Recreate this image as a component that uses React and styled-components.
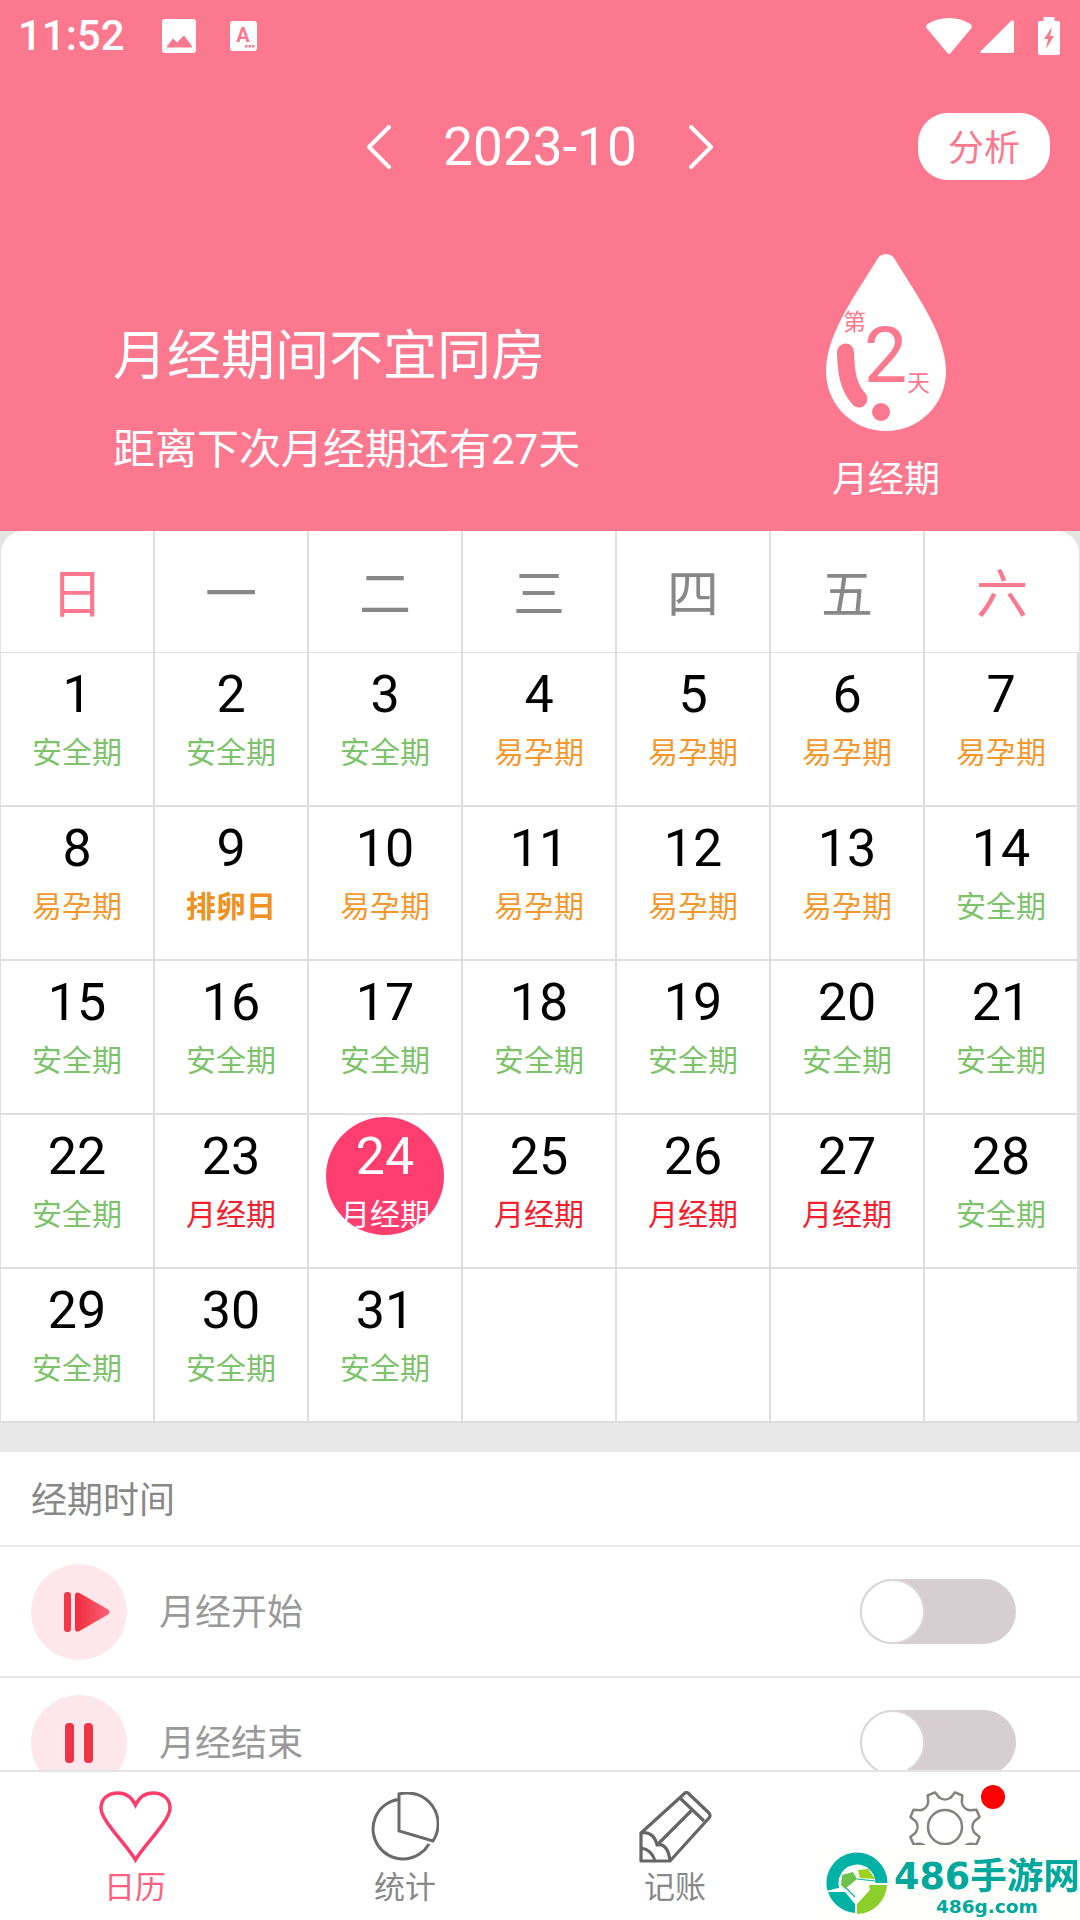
import styled, { createGlobalStyle } from "styled-components";

const PINK = "#fc788e";
const CJK = `"Noto Sans CJK SC", "Noto Sans", sans-serif`;

const GlobalStyle = createGlobalStyle`
  html, body {
    margin: 0;
    padding: 0;
    background: #fff;
    font-family: Roboto, ${CJK};
  }
  * { box-sizing: border-box; }
`;

const Page = styled.div`
  position: relative;
  width: 1080px;
  height: 1920px;
  display: flex;
  flex-direction: column;
  overflow: hidden;
  background: #fff;
`;

const Scroll = styled.div`
  flex: 1;
  min-height: 0;
  overflow: hidden;
`;

/* header */
const Header = styled.header`
  height: 531px;
  background: ${PINK};
  color: #fff;
  display: flex;
  flex-direction: column;
`;

const StatusBar = styled.div`
  height: 72px;
  padding: 0 20px 0 18px;
  display: flex;
  align-items: center;
  justify-content: space-between;
`;

const StatusGroup = styled.div`
  display: flex;
  align-items: center;
  gap: ${(p) => p.$gap}px;
`;

const Clock = styled.span`
  font-size: 42px;
  font-weight: 500;
  line-height: 48px;
  width: 110px;
`;

const BatterySlot = styled.div`
  margin-left: 16px;
  display: flex;
`;

const NavRow = styled.div`
  height: 150px;
  padding: 0 30px;
  display: grid;
  grid-template-columns: 1fr auto 1fr;
  align-items: center;
`;

const MonthPicker = styled.div`
  grid-column: 2;
  display: flex;
  align-items: center;
  gap: 52px;
  font-size: 53px;
`;

const AnalyseButton = styled.button`
  grid-column: 3;
  justify-self: end;
  width: 132px;
  height: 67px;
  border: 0;
  padding: 0 0 3px;
  margin-bottom: 2px;
  border-radius: 30px;
  background: #fff;
  color: ${PINK};
  font-family: ${CJK};
  font-size: 36px;
`;

const Banner = styled.div`
  flex: 1;
  display: flex;
  justify-content: space-between;
  padding-right: 74px;
`;

const Advice = styled.div`
  padding: 105px 0 0 113px;
  font-family: Roboto, ${CJK};
`;

const AdviceTitle = styled.div`
  font-size: 54px;
  line-height: 60px;
`;

const AdviceSub = styled.div`
  margin-top: 38px;
  font-size: 42px;
  line-height: 50px;
`;

const Phase = styled.div`
  width: 240px;
  padding-top: 30px;
  display: flex;
  flex-direction: column;
  align-items: center;
`;

const Drop = styled.div`
  position: relative;
  width: 120px;
  height: 179px;
  color: ${PINK};
`;

const DropText = styled.span`
  position: absolute;
  left: ${(p) => p.$x}px;
  top: ${(p) => p.$y}px;
  font-size: ${(p) => p.$size}px;
  line-height: 1;
`;

const PhaseName = styled.div`
  margin-top: 22px;
  font-family: ${CJK};
  font-size: 36px;
  line-height: 46px;
`;

/* calendar */
const Calendar = styled.div`
  background: #e4e4e4;
`;

const Weekdays = styled.div`
  display: grid;
  grid-template-columns: repeat(7, 154px);
  padding-left: 1px;
  width: 1080px;
`;

const Weekday = styled.div`
  height: 122px;
  padding-bottom: 3px;
  background: #fff;
  border-right: 2px solid #dedede;
  border-bottom: 1px solid #dedede;
  display: flex;
  align-items: center;
  justify-content: center;
  font-family: ${CJK};
  font-size: 52px;
  color: ${(p) => (p.$weekend ? PINK : "#888")};
  &:first-child { border-top-left-radius: 22px; }
  &:last-child { border-top-right-radius: 22px; border-right: 0; }
`;

const Days = styled.div`
  display: grid;
  grid-template-columns: repeat(7, 154px);
  padding-left: 1px;
  background: #dedede;
`;

const Day = styled.div`
  position: relative;
  height: 154px;
  background: #fff;
  border-right: 2px solid #dedede;
  border-bottom: 2px solid #dedede;
  display: flex;
  flex-direction: column;
  align-items: center;
  padding-top: 12px;
  overflow: hidden;
`;

const TodayCircle = styled.div`
  position: absolute;
  left: 17px;
  top: 2px;
  width: 118px;
  height: 118px;
  border-radius: 50%;
  background: #ff3e70;
`;

const DayNumber = styled.div`
  position: relative;
  font-family: Roboto, sans-serif;
  font-size: 52px;
  line-height: 60px;
  color: ${(p) => (p.$today ? "#fff" : "#000")};
`;

const labelColors = {
  safe: "#7dc36b",
  fertile: "#f4972d",
  ovulation: "#ee9223",
  period: "#f5202e",
  today: "#fff",
};

const DayLabel = styled.div`
  position: relative;
  margin-top: 3px;
  font-family: ${CJK};
  font-size: 30px;
  line-height: 44px;
  font-weight: ${(p) => (p.$kind === "ovulation" ? 700 : 400)};
  color: ${(p) => labelColors[p.$kind]};
`;

const Gap = styled.div`
  height: 29px;
  background: #e8e8e8;
`;

/* period settings */
const SectionTitle = styled.div`
  height: 95px;
  padding: 0 0 4px 31px;
  display: flex;
  align-items: center;
  font-family: ${CJK};
  font-size: 36px;
  color: #888;
  border-bottom: 2px solid #e8e8e8;
`;

const Row = styled.div`
  height: 131px;
  padding: 0 64px 0 31px;
  display: flex;
  align-items: center;
  border-bottom: 2px solid #e8e8e8;
`;

const RowIcon = styled.div`
  width: 96px;
  height: 96px;
  border-radius: 50%;
  background: #fde6ec;
  display: flex;
  align-items: center;
  justify-content: center;
`;

const RowLabel = styled.div`
  flex: 1;
  margin-left: 32px;
  padding-bottom: 5px;
  font-family: ${CJK};
  font-size: 36px;
  color: #999;
`;

const Toggle = styled.div`
  width: 156px;
  height: 65px;
  margin-bottom: 1px;
  border-radius: 33px;
  background: #d6ced1;
  display: flex;
  align-items: center;
`;

const Knob = styled.div`
  width: 65px;
  height: 65px;
  border-radius: 50%;
  background: #fff;
  border: 2px solid #ddd6d9;
`;

/* tab bar */
const TabBar = styled.nav`
  height: 150px;
  flex-shrink: 0;
  background: #fff;
  border-top: 2px solid #e4e4e4;
  display: grid;
  grid-template-columns: repeat(4, 270px);
`;

const Tab = styled.div`
  position: relative;
  display: flex;
  flex-direction: column;
  align-items: center;
  padding-top: 19px;
  font-family: ${CJK};
  font-size: 31px;
  color: ${(p) => (p.$active ? "#fc6180" : "#888")};
`;

const TabIconBox = styled.div`
  height: 72px;
  display: flex;
  align-items: center;
  justify-content: center;
`;

const TabText = styled.div`
  margin-top: 2px;
  line-height: 40px;
`;

const RedDot = styled.span`
  position: absolute;
  left: 171px;
  top: 13px;
  width: 24px;
  height: 24px;
  border-radius: 50%;
  background: #fe0000;
`;

const Watermark = styled.div`
  position: absolute;
  right: 0;
  bottom: 0;
  width: 254px;
  height: 75px;
  background: #fffffc;
  display: flex;
  align-items: center;
  gap: 6px;
`;

const WatermarkText = styled.div`
  padding-top: 10px;
  display: flex;
  flex-direction: column;
  align-items: center;
  color: #00a79d;
  font-weight: 700;
`;

const WatermarkTitle = styled.div`
  font-family: "DejaVu Sans", "Noto Sans CJK SC", sans-serif;
  font-size: 36.5px;
  line-height: 38px;
  white-space: nowrap;
`;

const WatermarkSite = styled.div`
  font-family: "DejaVu Sans", sans-serif;
  font-size: 18.5px;
  line-height: 22px;
`;

const Chevron = ({ right }) => (
  <svg width="24" height="44" viewBox="0 0 24 44" fill="none" stroke="#fff" strokeWidth="4" strokeLinecap="round" strokeLinejoin="round">
    <path d={right ? "M2 2 L22 22 L2 42" : "M22 2 L2 22 L22 42"} />
  </svg>
);

const ImageIcon = () => (
  <svg width="34" height="34" viewBox="0 0 34 34">
    <rect width="34" height="34" rx="3" fill="#fff" />
    <path d="M5 28 L11 20 L15 24 L22 17 L30 28Z" fill={PINK} stroke={PINK} strokeWidth="1" strokeLinejoin="round" />
  </svg>
);

const KeyboardIcon = () => (
  <svg width="27" height="30" viewBox="0 0 27 30">
    <rect width="27" height="30" rx="3" fill="#fff" />
    <text x="13" y="21" textAnchor="middle" fontFamily="Roboto" fontWeight="700" fontSize="20" fill={PINK}>A</text>
    <path d="M15 24h2.500v2.500h-2.500zM18.500 24h2.500v2.500h-2.500zM22 24h2.500v2.500h-2.500z" fill={PINK} />
  </svg>
);

const WifiIcon = () => (
  <svg width="46" height="36" viewBox="0 0 46 36">
    <path d="M23 36 Q22 36 21 34.500 L0.500 10 Q-0.500 8 1.500 6 Q11 0 23 0 Q35 0 44.500 6 Q46.500 8 45.500 10 L25 34.500 Q24 36 23 36Z" fill="#fff" />
  </svg>
);

const SignalIcon = () => (
  <svg width="34" height="33" viewBox="0 0 34 33">
    <path d="M31 1 Q34 -1 34 2 V31 Q34 33 32 33 H2 Q-1 33 1 31Z" fill="#fff" />
  </svg>
);

const BatteryIcon = () => (
  <svg width="22" height="38" viewBox="0 0 22 38">
    <path d="M5.500 0h11v4h3.500q2 0 2 2v30q0 2-2 2H2q-2 0-2-2V6q0-2 2-2h3.500z" fill="#fff" />
    <path d="M14 10 L6 22 H10 L8 32 L16 19 H12Z" fill={PINK} />
  </svg>
);

const DropShape = () => (
  <svg width="120" height="179" viewBox="0 0 120 179">
    <path d="M52 6 C55 1 65 1 68 6 C85 35 120 80 120 119 C120 153 93 179 60 179 C27 179 0 153 0 119 C0 80 35 35 52 6Z" fill="#fff" />
    <path d="M19.500 100 C20 120 22 135 33 147" fill="none" stroke={PINK} strokeWidth="17" strokeLinecap="round" />
    <circle cx="55" cy="160" r="9" fill={PINK} />
  </svg>
);

const PlayIcon = () => (
  <svg width="46" height="40" viewBox="0 0 46 40" style={{ marginLeft: 16 }}>
    <defs>
      <linearGradient id="playGrad" x1="0" x2="1" y1="0" y2="0">
        <stop offset="0" stopColor="#f02c3c" />
        <stop offset="1" stopColor="#fb6078" />
      </linearGradient>
    </defs>
    <rect x="0" y="0" width="7" height="40" rx="3" fill="#f23a4a" />
    <path d="M11 3.500 Q11 -1 15.500 1 L44 17.500 Q47 20 44 22.500 L15.500 39 Q11 41 11 36.500Z" fill="url(#playGrad)" />
  </svg>
);

const PauseIcon = () => (
  <svg width="28" height="42" viewBox="0 0 28 42">
    <rect x="0" y="1" width="9" height="40" rx="4" fill="#ef3445" />
    <rect x="19" y="1" width="9" height="40" rx="4" fill="#ef3445" />
  </svg>
);

const HeartIcon = () => (
  <svg width="73" height="72" viewBox="0 0 73 72" fill="none" stroke="#fc3d6c" strokeWidth="3.500">
    <path d="M36.500 69 C28 54 2 30 2 17 C2 7 10 2 19 2 C27 2 33 7 36.500 14 C40 7 46 2 54 2 C63 2 71 7 71 17 C71 30 45 54 36.500 69Z" />
  </svg>
);

const PieIcon = () => (
  <svg width="68" height="70" viewBox="0 0 68 70" fill="none" stroke="#6a6a6a" strokeWidth="3">
    <path d="M27 7.400 A30 30 0 1 0 58 52" />
    <path d="M28 2 V39 L62 49 A31 31 0 0 0 28 2Z" />
  </svg>
);

const PencilIcon = () => (
  <svg width="73" height="72" viewBox="0 0 73 72" fill="none" stroke="#666" strokeWidth="3.200" strokeLinejoin="round">
    <path d="M46 2 Q47 1 49 2 L70 22 Q72 25 70 27 L31 70 H2 V42Z" />
    <path d="M41 7 L65 30" />
    <path d="M53 19 L18 54" />
    <path d="M2 42 C10 40 16 45 18 54 C26 52 30 60 31 70" />
    <path d="M2 57 C9 58 14 63 16 70" />
  </svg>
);

// eight teeth with scallops between them, none pointing straight up
const gearPath = (() => {
  const c = 37;
  const outer = 36;
  const root = 30;
  const at = (a, r) => `${(c + r * Math.cos(a)).toFixed(1)} ${(c + r * Math.sin(a)).toFixed(1)}`;
  let d = "";
  for (let i = 0; i < 8; i++) {
    const a = (i * Math.PI) / 4 - Math.PI / 2 + Math.PI / 8;
    d += `${i === 0 ? "M" : "A9.500 9.500 0 0 0"} ${at(a - 0.2, root)} L${at(a - 0.11, outer)} L${at(a + 0.11, outer)} L${at(a + 0.2, root)} `;
  }
  const first = -Math.PI / 2 + Math.PI / 8 - 0.2;
  return `${d}A9.500 9.500 0 0 0 ${at(first, root)}Z`;
})();

const GearIcon = () => (
  <svg width="74" height="74" viewBox="0 0 74 74" fill="none" stroke="#85817c" strokeWidth="2.500" strokeLinejoin="round">
    <path d={gearPath} />
    <circle cx="37" cy="37" r="17" />
  </svg>
);

const WatermarkLogo = () => (
  <svg width="62" height="62" viewBox="0 0 62 62" style={{ flexShrink: 0 }}>
    <path d="M7.300 37.300 A24.500 24.500 0 1 1 55.500 31" fill="none" stroke="#00b2a6" strokeWidth="12" />
    <path d="M2 40 H19 L29 52 V61 A31 31 0 0 1 2 40Z" fill="#00b2a6" />
    <path d="M61 33 A30.500 30.500 0 0 1 31 62 V52 L44 38 L43 33Z" fill="#8ccf2a" />
    <path d="M16 23 L27 20 L31 27 L19 37 L15 33Z" fill="#6cc24a" />
    <path d="M32 18 L42 17 L49 27 L34 26Z" fill="#9ad21e" />
    <path d="M31 27 L49 29 M20 36 L29 45" fill="none" stroke="#00b2a6" strokeWidth="1.200" />
  </svg>
);

const kindText = { safe: "安全期", fertile: "易孕期", ovulation: "排卵日", period: "月经期" };

const kindOf = (d) => {
  if (d === 9) return "ovulation";
  if (d >= 4 && d <= 13) return "fertile";
  if (d >= 23 && d <= 27) return "period";
  return "safe";
};

const days = Array.from({ length: 35 }, (_, i) => (i < 31 ? i + 1 : null));
const weekdays = ["日", "一", "二", "三", "四", "五", "六"];

const App = () => {
  return (
    <Page>
      <GlobalStyle />
      <Scroll>
        <Header>
          <StatusBar>
            <StatusGroup $gap={34}>
              <Clock>11:52</Clock>
              <ImageIcon />
              <KeyboardIcon />
            </StatusGroup>
            <StatusGroup $gap={8}>
              <WifiIcon />
              <SignalIcon />
              <BatterySlot>
                <BatteryIcon />
              </BatterySlot>
            </StatusGroup>
          </StatusBar>
          <NavRow>
            <MonthPicker>
              <Chevron />
              <span>2023-10</span>
              <Chevron right />
            </MonthPicker>
            <AnalyseButton>分析</AnalyseButton>
          </NavRow>
          <Banner>
            <Advice>
              <AdviceTitle>月经期间不宜同房</AdviceTitle>
              <AdviceSub>距离下次月经期还有27天</AdviceSub>
            </Advice>
            <Phase>
              <Drop>
                <DropShape />
                <DropText $x={17} $y={59} $size={23}>第</DropText>
                <DropText $x={38} $y={66} $size={77}>2</DropText>
                <DropText $x={81} $y={120} $size={23}>天</DropText>
              </Drop>
              <PhaseName>月经期</PhaseName>
            </Phase>
          </Banner>
        </Header>
        <Calendar>
          <Weekdays>
            {weekdays.map((w, i) => (
              <Weekday key={w} $weekend={i === 0 || i === 6}>{w}</Weekday>
            ))}
          </Weekdays>
          <Days>
            {days.map((d, i) => {
              if (!d) return <Day key={i} />;
              const today = d === 24;
              const kind = kindOf(d);
              return (
                <Day key={i}>
                  {today && <TodayCircle />}
                  <DayNumber $today={today}>{d}</DayNumber>
                  <DayLabel $kind={today ? "today" : kind}>{kindText[kind]}</DayLabel>
                </Day>
              );
            })}
          </Days>
        </Calendar>
        <Gap />
        <SectionTitle>经期时间</SectionTitle>
        <Row>
          <RowIcon><PlayIcon /></RowIcon>
          <RowLabel>月经开始</RowLabel>
          <Toggle><Knob /></Toggle>
        </Row>
        <Row>
          <RowIcon><PauseIcon /></RowIcon>
          <RowLabel>月经结束</RowLabel>
          <Toggle><Knob /></Toggle>
        </Row>
      </Scroll>
      <TabBar>
        <Tab $active>
          <TabIconBox><HeartIcon /></TabIconBox>
          <TabText>日历</TabText>
        </Tab>
        <Tab>
          <TabIconBox><PieIcon /></TabIconBox>
          <TabText>统计</TabText>
        </Tab>
        <Tab>
          <TabIconBox><PencilIcon /></TabIconBox>
          <TabText>记账</TabText>
        </Tab>
        <Tab>
          <TabIconBox><GearIcon /></TabIconBox>
          <RedDot />
        </Tab>
      </TabBar>
      <Watermark>
        <WatermarkLogo />
        <WatermarkText>
          <WatermarkTitle>486手游网</WatermarkTitle>
          <WatermarkSite>486g.com</WatermarkSite>
        </WatermarkText>
      </Watermark>
    </Page>
  );
};

export default App;
